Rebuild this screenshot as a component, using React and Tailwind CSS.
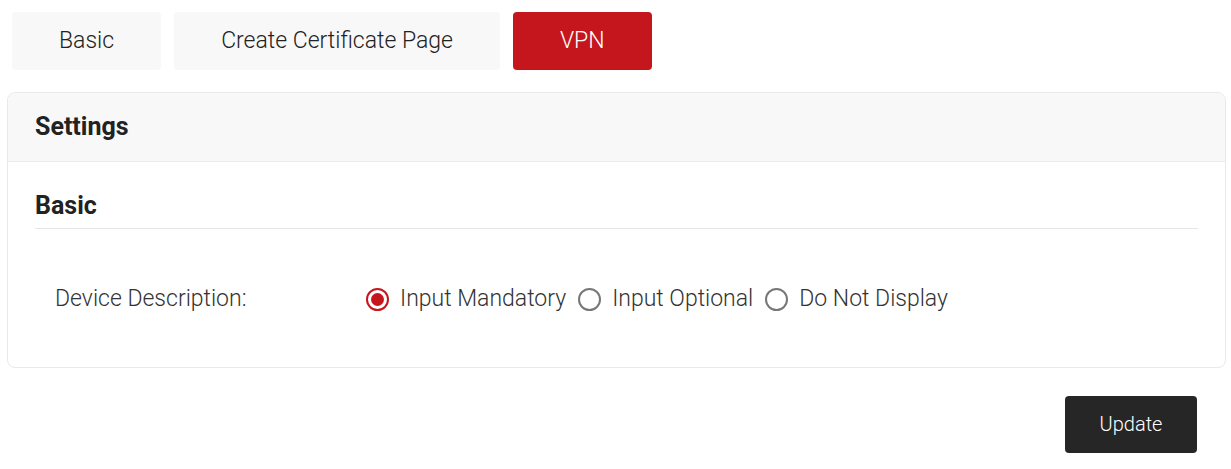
import { useState } from 'react'

const tabs = ['Basic', 'Create Certificate Page', 'VPN']
const options = ['Input Mandatory', 'Input Optional', 'Do Not Display']

function Radio({ checked, label, onClick }) {
  return (
    <label className="flex items-center cursor-pointer" onClick={onClick}>
      <span
        className={[
          'flex h-[23px] w-[23px] items-center justify-center rounded-full border-2',
          checked ? 'border-[#c4161c]' : 'border-[#777]',
        ].join(' ')}
      >
        {checked && <span className="h-[13px] w-[13px] rounded-full bg-[#c4161c]" />}
      </span>
      <span className="ml-[11px] text-[23px] font-light text-[#333]">{label}</span>
    </label>
  )
}

export default function App() {
  const [tab, setTab] = useState('VPN')
  const [desc, setDesc] = useState('Input Mandatory')

  return (
    <div className="w-[1231px] bg-white font-['Roboto',sans-serif] text-[#222]">
      {/* tabs */}
      <div className="flex gap-[13px] px-[12px] pt-[12px]">
        {tabs.map((t) => (
          <button
            key={t}
            onClick={() => setTab(t)}
            className={[
              'h-[58px] rounded-[4px] px-[47px] text-[23px] font-light',
              t === tab ? 'bg-[#c4161c] text-white' : 'bg-[#f8f8f8] text-[#222]',
            ].join(' ')}
          >
            {t}
          </button>
        ))}
      </div>

      {/* settings card */}
      <div className="ml-[7px] mr-[5px] mt-[22px] overflow-hidden rounded-[8px] border border-[#e9e9e9]">
        <div className="flex h-[69px] items-center border-b border-[#ececec] bg-[#f8f8f8] px-[27px]">
          <h2 className="text-[25px] font-bold text-[#222]">Settings</h2>
        </div>
        <div className="px-[27px] pb-[50px]">
          <h3 className="flex h-[67px] items-end border-b border-[#e6e6e6] pb-[4px] text-[25px] font-bold text-[#222]">
            Basic
          </h3>
          <div className="mt-[53px] flex items-center pl-[20px]">
            <span className="w-[311px] text-[23px] font-light text-[#333]">Device Description:</span>
            <div className="flex items-center gap-[12px]">
              {options.map((o) => (
                <Radio key={o} label={o} checked={desc === o} onClick={() => setDesc(o)} />
              ))}
            </div>
          </div>
        </div>
      </div>

      {/* actions */}
      <div className="flex justify-end pr-[34px] pt-[28px]">
        <button className="h-[57px] w-[132px] rounded-[4px] bg-[#262626] text-[20px] font-light text-white">
          Update
        </button>
      </div>
    </div>
  )
}
